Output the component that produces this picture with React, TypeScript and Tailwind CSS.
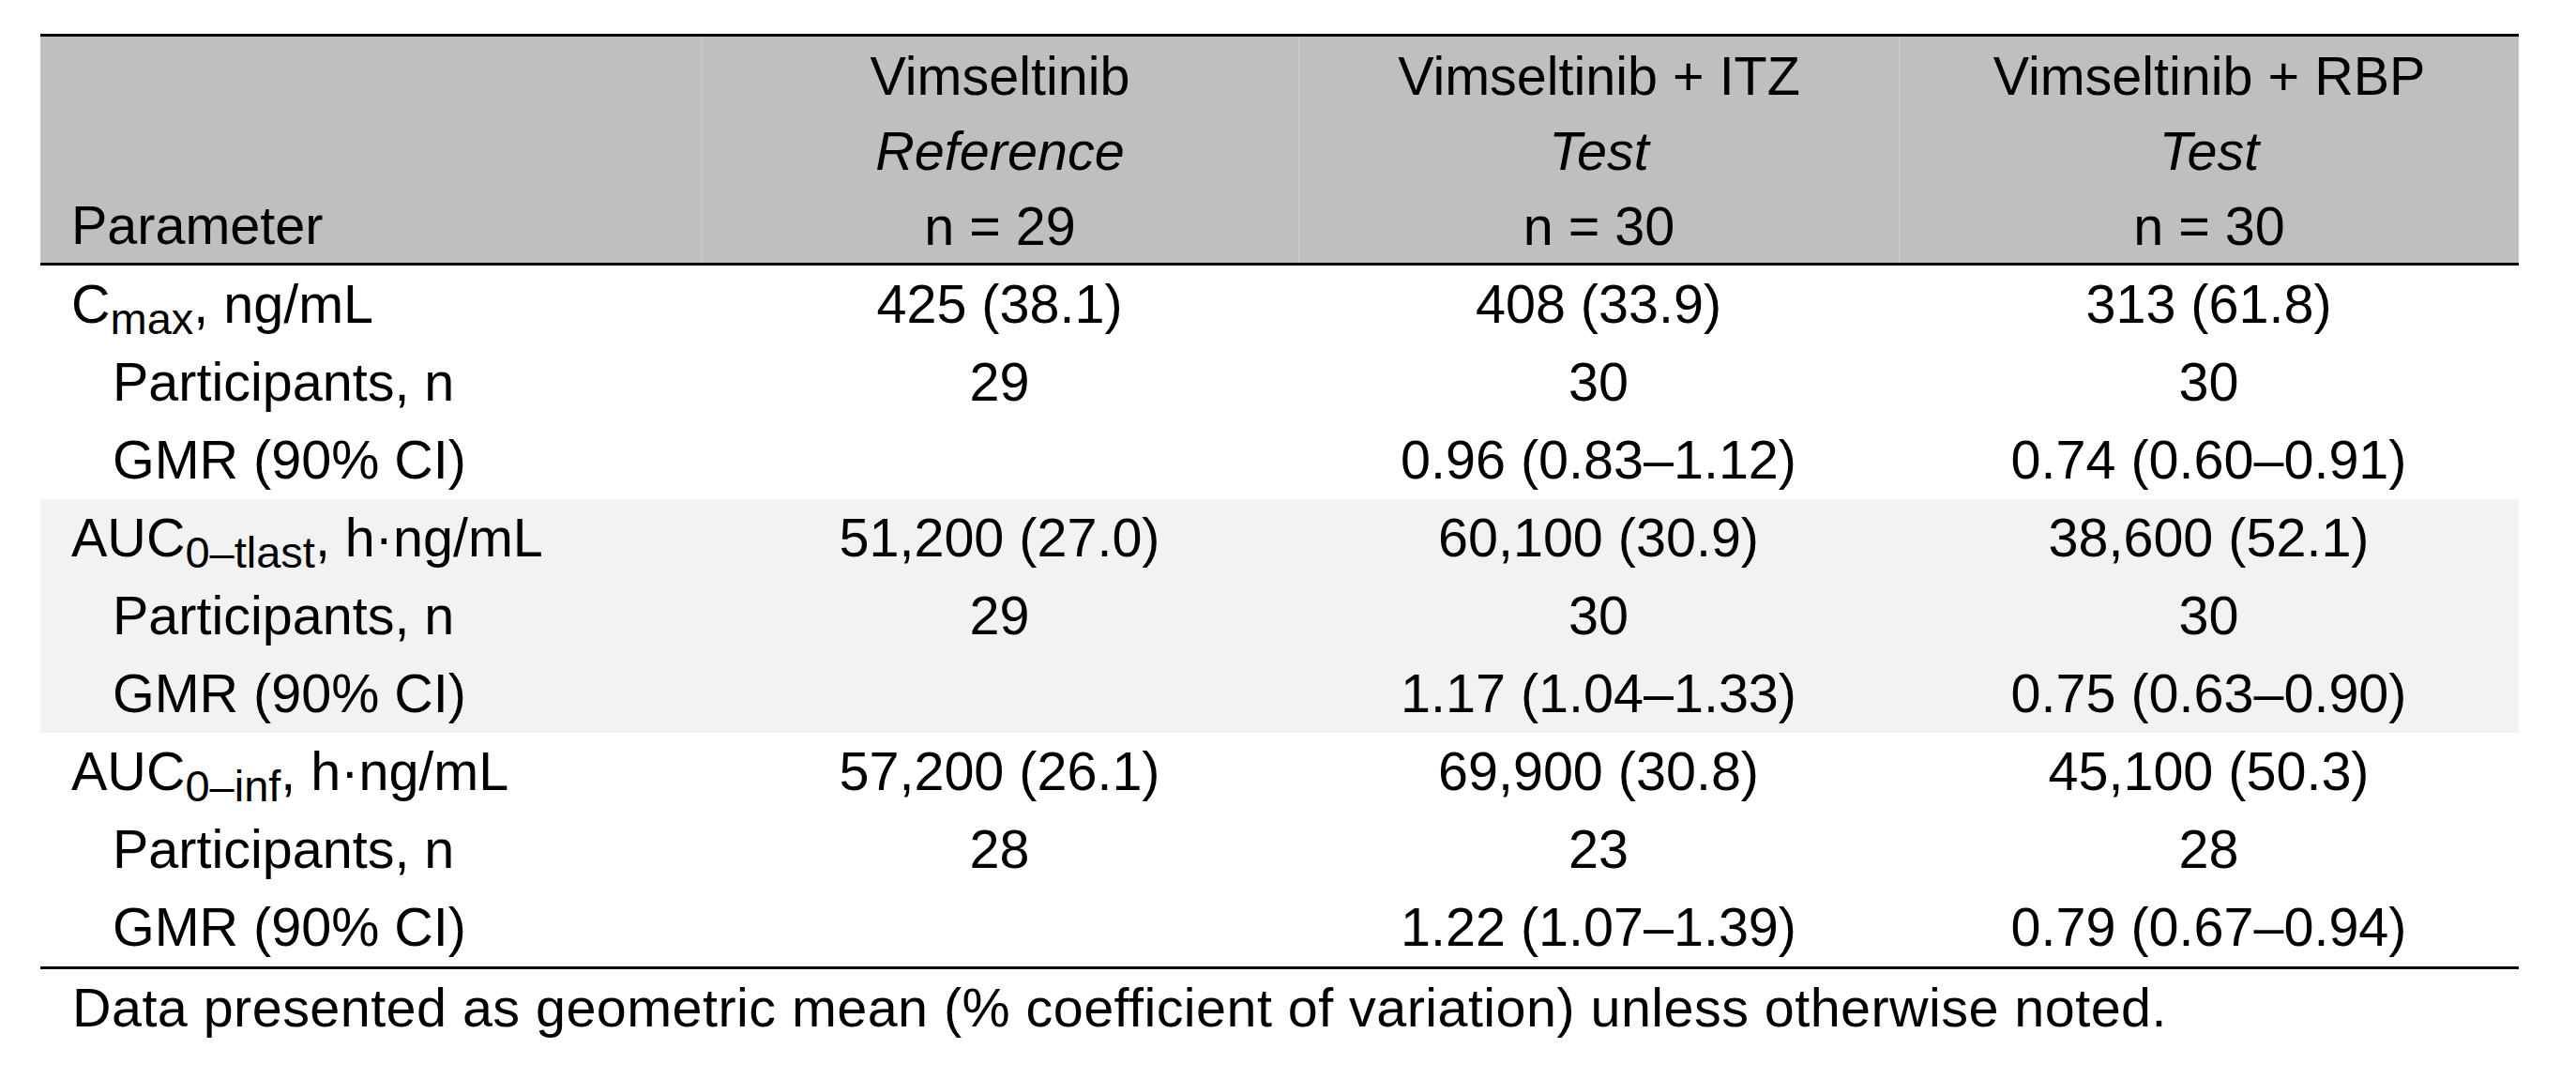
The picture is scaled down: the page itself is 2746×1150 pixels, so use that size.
type Row = {
  label: React.ReactNode;
  indent?: boolean;
  values: string[];
};

type Group = {
  shaded?: boolean;
  rows: Row[];
};

const Sub = ({ children }: { children: React.ReactNode }) => (
  <span className="text-[47px] relative top-[12px] leading-none">{children}</span>
);

const groups: Group[] = [
  {
    rows: [
      {
        label: (
          <>
            C<Sub>max</Sub>, ng/mL
          </>
        ),
        values: ["425 (38.1)", "408 (33.9)", "313 (61.8)"],
      },
      { label: "Participants, n", indent: true, values: ["29", "30", "30"] },
      { label: "GMR (90% CI)", indent: true, values: ["", "0.96 (0.83–1.12)", "0.74 (0.60–0.91)"] },
    ],
  },
  {
    shaded: true,
    rows: [
      {
        label: (
          <>
            AUC<Sub>0–tlast</Sub>, h·ng/mL
          </>
        ),
        values: ["51,200 (27.0)", "60,100 (30.9)", "38,600 (52.1)"],
      },
      { label: "Participants, n", indent: true, values: ["29", "30", "30"] },
      { label: "GMR (90% CI)", indent: true, values: ["", "1.17 (1.04–1.33)", "0.75 (0.63–0.90)"] },
    ],
  },
  {
    rows: [
      {
        label: (
          <>
            AUC<Sub>0–inf</Sub>, h·ng/mL
          </>
        ),
        values: ["57,200 (26.1)", "69,900 (30.8)", "45,100 (50.3)"],
      },
      { label: "Participants, n", indent: true, values: ["28", "23", "28"] },
      { label: "GMR (90% CI)", indent: true, values: ["", "1.22 (1.07–1.39)", "0.79 (0.67–0.94)"] },
    ],
  },
];

const heads = [
  { name: "Vimseltinib", role: "Reference", n: "n = 29" },
  { name: "Vimseltinib + ITZ", role: "Test", n: "n = 30" },
  { name: "Vimseltinib + RBP", role: "Test", n: "n = 30" },
];

const cols = "grid grid-cols-[704px_637px_640px_661px]";

const App = () => {
  return (
    <div className="w-[2746px] h-[1150px] bg-white text-black pt-[36px] pl-[43px] font-['Liberation_Sans',Arial,Helvetica,sans-serif] text-[57.5px]">
      <div className="w-[2642px]">
        {/* header */}
        <div className={`${cols} bg-[#bfbfbf] border-t-[3px] border-b-[3px] border-black`}>
          <div className="h-[241px] pt-[2px] pl-[33px] flex flex-col justify-end leading-[80px]">
            <span>Parameter</span>
          </div>
          {heads.map((h) => (
            <div
              key={h.name}
              className="h-[241px] pt-[2px] flex flex-col items-center leading-[80px] border-l border-[#cecece]"
            >
              <span>{h.name}</span>
              <span className="italic">{h.role}</span>
              <span>{h.n}</span>
            </div>
          ))}
        </div>

        {/* body */}
        <div className="border-b-[3px] border-black">
          {groups.map((g, gi) => (
            <div key={gi} className={g.shaded ? "bg-[#f2f2f2]" : ""}>
              {g.rows.map((r, ri) => (
                <div key={ri} className={`${cols} h-[83px] leading-[83px] whitespace-nowrap`}>
                  <div className={r.indent ? "pl-[77px]" : "pl-[33px]"}>{r.label}</div>
                  {r.values.map((v, vi) => (
                    <div key={vi} className="text-center">
                      {v}
                    </div>
                  ))}
                </div>
              ))}
            </div>
          ))}
        </div>

        <p className="pl-[34px] leading-[83px] whitespace-nowrap tracking-[0.45px]">
          Data presented as geometric mean (% coefficient of variation) unless otherwise noted.
        </p>
      </div>
    </div>
  );
};

export default App;
